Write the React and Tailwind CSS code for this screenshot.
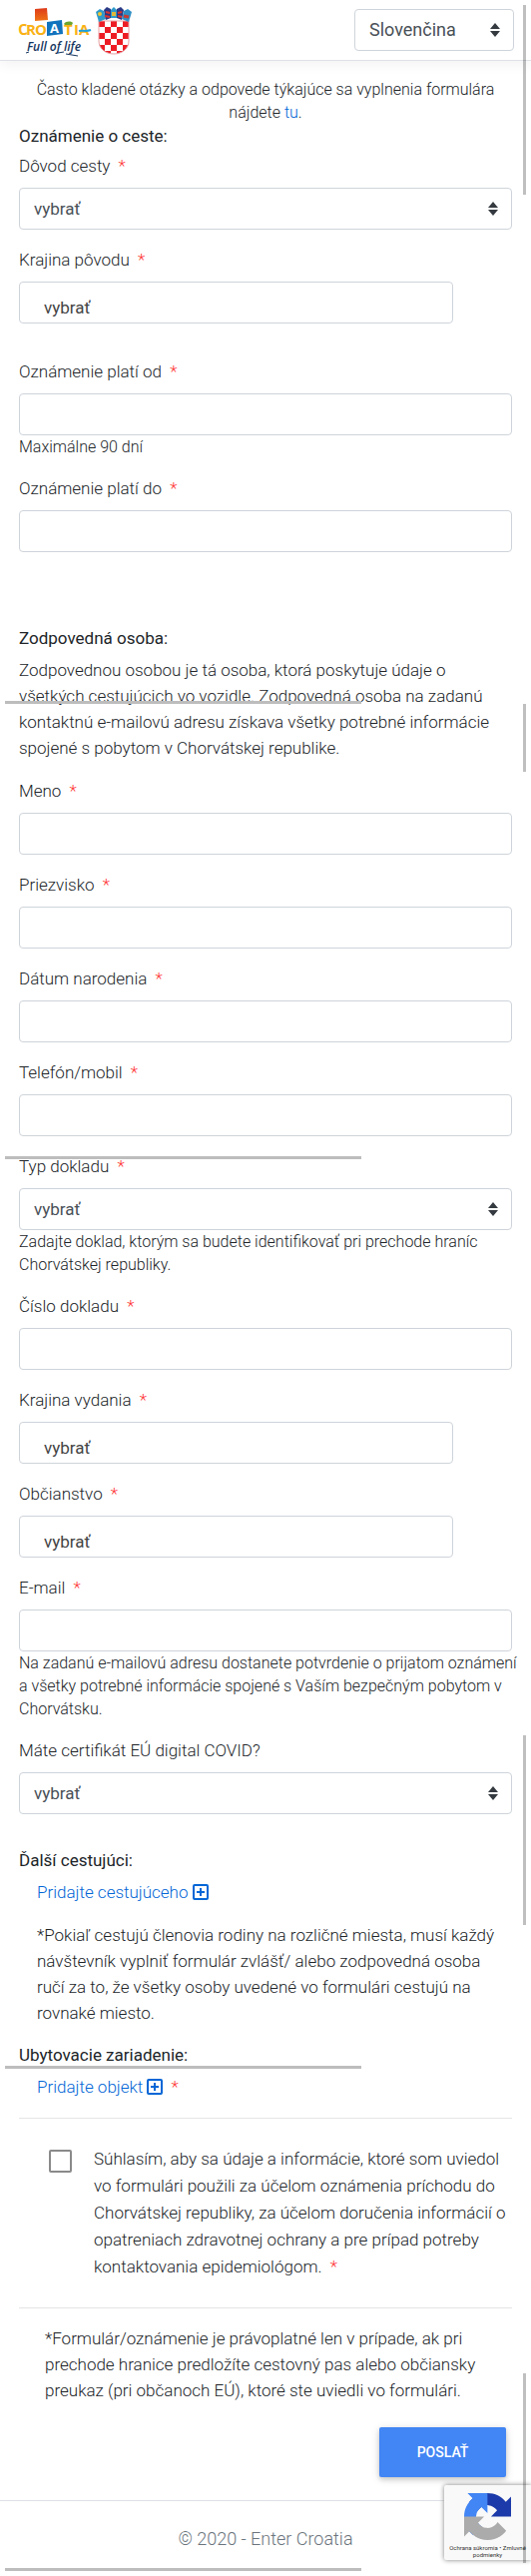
import React from 'react';

const inputClass =
  'block w-full h-[42px] px-3 bg-white border border-[#ced4da] rounded text-[17px] text-[#495057]';

function Star() {
  return <span className="ml-1 text-[#ff3333]">*</span>;
}

function Sorter() {
  return (
    <svg
      className="absolute right-[14px] top-[14px] pointer-events-none"
      width="10"
      height="14"
      viewBox="0 0 10 14"
      fill="#343a40"
      aria-hidden="true"
    >
      <path d="M0 6 5 0l5 6zM0 8l5 6 5-6z" />
    </svg>
  );
}

function Field({ id, label, required = true, help, children }) {
  return (
    <div className="mb-[17px]">
      <label htmlFor={id} className="block mb-[9px] leading-[26px]">
        {label} {required && <Star />}
      </label>
      {children || <input id={id} type="text" className={inputClass} />}
      {help && <small className="block -mr-2 text-[16px] leading-[23px]">{help}</small>}
    </div>
  );
}

function SelectBox({ id }) {
  return (
    <div className="relative">
      <select
        id={id}
        className="block w-full h-[42px] pl-[14px] pr-8 appearance-none bg-white border border-[#ced4da] rounded font-normal text-[17px] text-[#495057]"
      >
        <option>vybrať</option>
      </select>
      <Sorter />
    </div>
  );
}

function CountrySelect({ id }) {
  return (
    <select
      id={id}
      className="block w-[88%] h-[42px] pl-6 pt-[10px] appearance-none bg-white border border-[#ced4da] rounded font-normal text-[17px] text-[#444444]"
    >
      <option>vybrať</option>
    </select>
  );
}

function PlusSquare() {
  return (
    <svg
      className="inline-block ml-1 align-[-2px]"
      width="16"
      height="16"
      viewBox="0 0 16 16"
      fill="none"
      stroke="#0366d6"
      strokeWidth="2"
      aria-hidden="true"
    >
      <rect x="1" y="1" width="14" height="14" rx="1" />
      <path d="M8 4v8M4 8h8" />
    </svg>
  );
}

function CroatiaLogo() {
  return (
    <svg width="74" height="50" viewBox="0 0 74 50" aria-label="Croatia Full of life">
      <defs>
        <linearGradient id="sun" x1="0" y1="0" x2="0" y2="1">
          <stop offset="0" stopColor="#dd3a1b" />
          <stop offset="1" stopColor="#ef7314" />
        </linearGradient>
      </defs>
      <path d="M17 2l12-1 1 12-13 1z" fill="url(#sun)" />
      <path d="M29 15l15-2 1 14-16 2z" fill="#1173bd" />
      <g fontFamily="'Open Sans', sans-serif" fontWeight="700" fontSize="15" fill="#f9b115">
        <text x="0" y="28" transform="rotate(-4 4 22)">C</text>
        <text x="8" y="28">R</text>
        <text x="17" y="28">O</text>
        <text x="32" y="26" fontSize="13" fill="#ffffff">A</text>
        <text x="46" y="28">T</text>
        <text x="56" y="28">I</text>
        <text x="61" y="28">A</text>
      </g>
      <path d="M46 17c2-3 7-3 9-1l-1 2h-7z" fill="#6da52f" />
      <path d="M61 24c4-1 7 1 12-1" stroke="#1ba0dc" strokeWidth="2" fill="none" />
      <text
        x="9"
        y="44"
        fontFamily="'Open Sans', sans-serif"
        fontStyle="italic"
        fontWeight="600"
        fontSize="12"
        fill="#16365f"
      >
        Full of life
      </text>
      <path d="M8 46l3-1M40 46l6-1M48 47l12 2" stroke="#16365f" fill="none" />
    </svg>
  );
}

function Crest() {
  const cells = [];
  for (let row = 0; row < 6; row++) {
    for (let col = 0; col < 5; col++) {
      if ((row + col) % 2 === 0) cells.push([col, row]);
    }
  }
  return (
    <svg width="36" height="48" viewBox="0 0 36 48" aria-label="Grb">
      <defs>
        <clipPath id="shield">
          <path d="M3 14h30v20c0 8-7 13-15 13S3 42 3 34z" />
        </clipPath>
      </defs>
      <path d="M3 14h30v20c0 8-7 13-15 13S3 42 3 34z" fill="#ffffff" />
      <g clipPath="url(#shield)" fill="#ed1c24">
        {cells.map(([col, row]) => (
          <rect key={`${col}-${row}`} x={3 + col * 6} y={14 + row * 6} width="6" height="6" />
        ))}
      </g>
      <path d="M3 14h30v20c0 8-7 13-15 13S3 42 3 34z" fill="none" stroke="#e8a0a4" />
      <path d="M0 5l4-3 4 2 2 8-7 3z" fill="#2f9ac9" />
      <path d="M8 3l3-3 4 2v9l-5 2z" fill="#2a3a86" />
      <path d="M15 3l3-3 3 3v8h-6z" fill="#2f9ac9" />
      <path d="M21 2l4-2 3 3-2 10-5-2z" fill="#2a3a86" />
      <path d="M28 4l4-2 4 3-3 10-7-3z" fill="#2f8fc4" />
      <path d="M10 5l4 1M9 9l5 1M22 6l4-1M22 9l4 1" stroke="#d8342f" strokeWidth="2" />
      <circle cx="4" cy="7" r="2" fill="#f2c530" />
      <path d="M16 5h4v4h-4z" fill="#e0b93a" />
      <path d="M28 9l5 1" stroke="#c33b33" strokeWidth="3" />
    </svg>
  );
}

function CaptchaBadge() {
  return (
    <div className="absolute right-0 bottom-[17px] w-[87px] h-[75px] pt-2 flex flex-col items-center bg-[#f9f9f9] rounded-l-xs shadow-[0_0_5px_#808080] overflow-hidden">
      <svg width="47" height="47" viewBox="0 0 64 64" aria-label="reCAPTCHA">
        <path
          d="M64 31.955l-.033-1.37V4.687l-7.16 7.16C50.948 4.674 42.033.093 32.05.093c-10.4 0-19.622 4.96-25.458 12.64l11.736 11.86a15.55 15.55 0 0 1 4.754-5.334c2.05-1.6 4.952-2.906 8.968-2.906.485 0 .86.057 1.135.163 4.976.393 9.288 3.14 11.828 7.124l-8.307 8.307L64 31.953"
          fill="#1c3aa9"
        />
        <path
          d="M31.862.094l-1.37.033H4.594l7.16 7.16C4.58 13.147 0 22.06 0 32.046c0 10.4 4.96 19.622 12.64 25.458L24.5 45.768a15.55 15.55 0 0 1-5.334-4.754c-1.6-2.05-2.906-4.952-2.906-8.968 0-.485.057-.86.163-1.135.393-4.976 3.14-9.288 7.124-11.828l8.307 8.307L31.86.095"
          fill="#4285f4"
        />
        <path
          d="M.001 32.045l.033 1.37v25.898l7.16-7.16c5.86 7.173 14.774 11.754 24.76 11.754 10.4 0 19.622-4.96 25.458-12.64l-11.736-11.86a15.55 15.55 0 0 1-4.754 5.334c-2.05 1.6-4.952 2.906-8.968 2.906-.485 0-.86-.057-1.135-.163-4.976-.393-9.288-3.14-11.828-7.124l8.307-8.307c-10.522.04-22.4.066-27.295-.005"
          fill="#ababab"
        />
      </svg>
      <p className="mt-1 text-center font-normal text-[6px] leading-[7px] text-[#333333]">
        <a href="#privacy">Ochrana súkromia</a> • <a href="#terms">Zmluvné podmienky</a>
      </p>
    </div>
  );
}

// thin scroll indicators that lie over the page
function ScrollBars() {
  return (
    <div className="absolute inset-0 pointer-events-none" aria-hidden="true">
      <i className="absolute right-[5px] top-[5px] w-[3px] h-[190px] bg-black/25" />
      <i className="absolute right-[5px] top-[705px] w-[3px] h-[68px] bg-black/25" />
      <i className="absolute right-[5px] top-[1738px] w-[3px] h-[190px] bg-black/25" />
      <i className="absolute right-[5px] top-[2377px] w-[3px] h-[190px] bg-black/25" />
      <i className="absolute left-[5px] top-[702px] w-[357px] h-[3px] bg-[#bdbdbd]" />
      <i className="absolute left-[5px] top-[1158px] w-[357px] h-[3px] bg-[#bdbdbd]" />
      <i className="absolute left-[5px] top-[2069px] w-[357px] h-[3px] bg-[#bdbdbd]" />
      <i className="absolute left-[5px] top-[2572px] w-[357px] h-[3px] bg-[#bdbdbd]" />
    </div>
  );
}

export default function App() {
  return (
    <div className="relative bg-white font-[Roboto,sans-serif] font-light text-[17px] leading-[26px] text-[#212529]">
      <header className="flex items-start justify-between h-[61px] pl-[18px] pr-[17px] border-b border-[#dee2e6] shadow-[0_4px_12px_rgba(0,0,0,0.05)]">
        <a href="#home" className="flex items-start gap-1 pt-[7px]">
          <CroatiaLogo />
          <Crest />
        </a>
        <div className="relative w-[160px] mt-[9px]">
          <select
            aria-label="Jazyk"
            className="block w-full h-[42px] pl-[14px] pr-8 appearance-none bg-white border border-[#ced4da] rounded font-normal text-[18px] text-[#495057]"
          >
            <option>Slovenčina</option>
          </select>
          <Sorter />
        </div>
      </header>

      <main className="px-[19px] pt-[17px]">
        <p className="px-4 text-center text-[16px] leading-[23px]">
          Často kladené otázky a odpovede týkajúce sa vyplnenia formulára nájdete{' '}
          <a href="#faq" className="text-[#0366d6]">tu</a>.
        </p>

        <form onSubmit={e => e.preventDefault()}>
          <h2 className="mb-[5px] font-normal leading-6">Oznámenie o ceste:</h2>
          <Field id="reason" label="Dôvod cesty">
            <SelectBox id="reason" />
          </Field>
          <Field id="origin" label="Krajina pôvodu">
            <CountrySelect id="origin" />
          </Field>
          <div className="pt-[18px]">
            <Field id="from" label="Oznámenie platí od" help="Maximálne 90 dní" />
            <Field id="to" label="Oznámenie platí do" />
          </div>

          <h2 className="pt-[57px] mb-[7px] font-normal leading-6">Zodpovedná osoba:</h2>
          <p className="mb-[17px]">
            Zodpovednou osobou je tá osoba, ktorá poskytuje údaje o všetkých cestujúcich vo
            vozidle. Zodpovedná osoba na zadanú kontaktnú e-mailovú adresu získava všetky
            potrebné informácie spojené s pobytom v Chorvátskej republike.
          </p>
          <Field id="name" label="Meno" />
          <Field id="surname" label="Priezvisko" />
          <Field id="birth" label="Dátum narodenia" />
          <Field id="phone" label="Telefón/mobil" />
          <Field
            id="docType"
            label="Typ dokladu"
            help="Zadajte doklad, ktorým sa budete identifikovať pri prechode hraníc Chorvátskej republiky."
          >
            <SelectBox id="docType" />
          </Field>
          <Field id="docNumber" label="Číslo dokladu" />
          <Field id="issued" label="Krajina vydania">
            <CountrySelect id="issued" />
          </Field>
          <Field id="citizenship" label="Občianstvo">
            <CountrySelect id="citizenship" />
          </Field>
          <Field
            id="email"
            label="E-mail"
            help="Na zadanú e-mailovú adresu dostanete potvrdenie o prijatom oznámení a všetky potrebné informácie spojené s Vaším bezpečným pobytom v Chorvátsku."
          />
          <Field id="covid" label="Máte certifikát EÚ digital COVID?" required={false}>
            <SelectBox id="covid" />
          </Field>

          <h2 className="pt-[17px] mb-[7px] font-normal leading-6">Ďalší cestujúci:</h2>
          <div className="pl-[18px]">
            <a href="#traveller" className="text-[#0366d6]">
              Pridajte cestujúceho
              <PlusSquare />
            </a>
            <p className="mt-[17px] mb-[17px]">
              *Pokiaľ cestujú členovia rodiny na rozličné miesta, musí každý návštevník vyplniť
              formulár zvlášť/ alebo zodpovedná osoba ručí za to, že všetky osoby uvedené vo
              formulári cestujú na rovnaké miesto.
            </p>
          </div>

          <h2 className="mb-[7px] font-normal leading-6">Ubytovacie zariadenie:</h2>
          <div className="pl-[18px]">
            <a href="#facility" className="text-[#0366d6]">
              Pridajte objekt
              <PlusSquare />
            </a>{' '}
            <Star />
          </div>

          <hr className="mt-[18px] border-[#e5e5e5]" />
          <div className="flex items-start gap-[22px] pl-[30px] py-[27px]">
            <input
              id="consent"
              type="checkbox"
              className="shrink-0 mt-1 w-[23px] h-[23px] appearance-none border-2 border-[#8a8a8a] rounded-xs"
            />
            <label htmlFor="consent" className="-mr-2 leading-[27px]">
              Súhlasím, aby sa údaje a informácie, ktoré som uviedol vo formulári použili za
              účelom oznámenia príchodu do Chorvátskej republiky, za účelom doručenia
              informácií o opatreniach zdravotnej ochrany a pre prípad potreby kontaktovania
              epidemiológom. <Star />
            </label>
          </div>
          <hr className="border-[#e5e5e5]" />

          <p className="mt-[17px] px-[26px]">
            *Formulár/oznámenie je právoplatné len v prípade, ak pri prechode hranice
            predložíte cestovný pas alebo občiansky preukaz (pri občanoch EÚ), ktoré ste
            uviedli vo formulári.
          </p>
          <div className="flex justify-end pr-[6px] mt-6 mb-[23px]">
            <button
              type="submit"
              className="w-[127px] h-[50px] bg-[#4285f4] rounded-xs font-medium text-[14px] text-white uppercase shadow-[0_2px_5px_rgba(0,0,0,0.16),0_2px_10px_rgba(0,0,0,0.12)]"
            >
              Poslať
            </button>
          </div>
        </form>
      </main>

      <footer className="py-[25px] border-t border-[#dee2e6] text-center text-[18px] text-[#6c757d]">
        © 2020 - Enter Croatia
      </footer>

      <CaptchaBadge />
      <ScrollBars />
    </div>
  );
}
